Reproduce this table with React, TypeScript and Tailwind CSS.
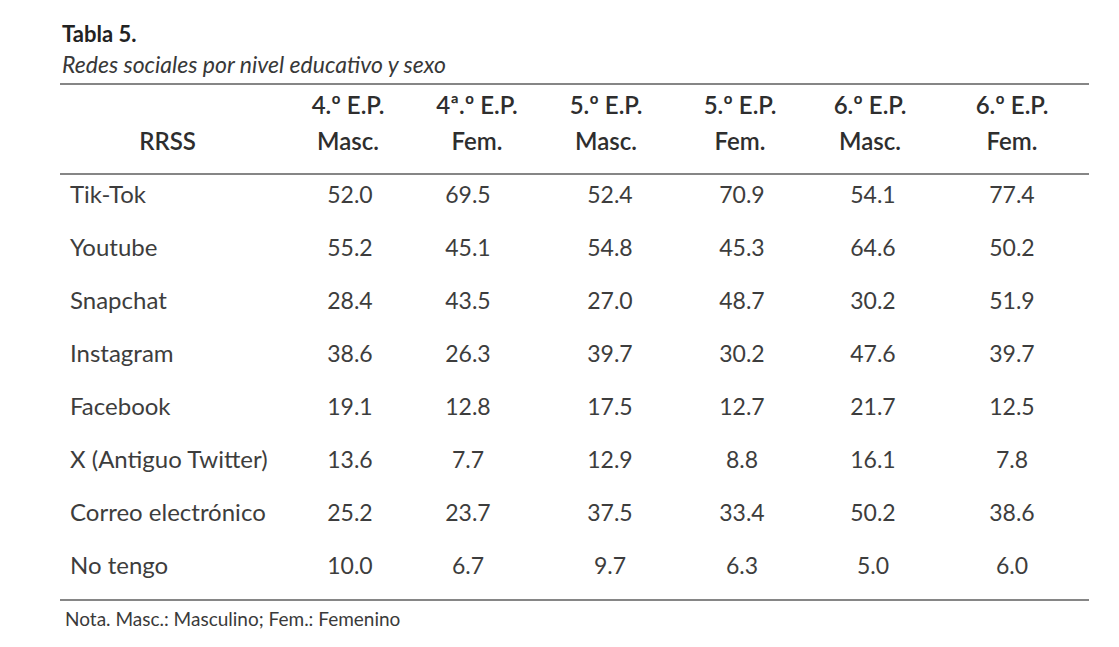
const headers = [
  { top: "4.º E.P.", bottom: "Masc." },
  { top: "4ª.º E.P.", bottom: "Fem." },
  { top: "5.º E.P.", bottom: "Masc." },
  { top: "5.º E.P.", bottom: "Fem." },
  { top: "6.º E.P.", bottom: "Masc." },
  { top: "6.º E.P.", bottom: "Fem." },
];

const rows: { name: string; values: string[] }[] = [
  { name: "Tik-Tok", values: ["52.0", "69.5", "52.4", "70.9", "54.1", "77.4"] },
  { name: "Youtube", values: ["55.2", "45.1", "54.8", "45.3", "64.6", "50.2"] },
  { name: "Snapchat", values: ["28.4", "43.5", "27.0", "48.7", "30.2", "51.9"] },
  { name: "Instagram", values: ["38.6", "26.3", "39.7", "30.2", "47.6", "39.7"] },
  { name: "Facebook", values: ["19.1", "12.8", "17.5", "12.7", "21.7", "12.5"] },
  { name: "X (Antiguo Twitter)", values: ["13.6", "7.7", "12.9", "8.8", "16.1", "7.8"] },
  { name: "Correo electrónico", values: ["25.2", "23.7", "37.5", "33.4", "50.2", "38.6"] },
  { name: "No tengo", values: ["10.0", "6.7", "9.7", "6.3", "5.0", "6.0"] },
];

// small per-column nudges so the numbers sit where the original put them
const cellPad = ["pl-0", "pr-[24px]", "pl-0", "pl-[4px]", "pl-[6px]", "pl-0"];
const headPad = ["pr-[4px]", "pr-[6px]", "pr-[8px]", "pl-0", "pl-0", "pl-0"];

export default function App() {
  return (
    <div className="w-[1119px] h-[647px] bg-white font-['Lato','Open_Sans',sans-serif] text-[#3d3d3d] overflow-hidden">
      <div className="pl-[60px] pr-[30px] pt-[18px]">
        <p className="pl-[2px] text-[22px] leading-[31px] font-bold text-[#222]">Tabla 5.</p>
        <p className="pl-[2px] text-[23px] leading-[30px] italic text-[#383838]">
          Redes sociales por nivel educativo y sexo
        </p>

        <div className="mt-[4px] border-t-2 border-b-2 border-[#868686]">
          {/* header */}
          <div className="grid grid-cols-[225px_130px_130px_130px_130px_130px_154px] pt-[2px] pb-[14px] border-b-2 border-[#868686] text-[24px] leading-[36px] font-semibold text-[#2e2e2e]">
            <div className="flex items-end justify-center pr-[10px]">RRSS</div>
            {headers.map((h, i) => (
              <div key={`Header-${i}`} className={`flex flex-col items-center ${headPad[i]}`}>
                <span>{h.top}</span>
                <span>{h.bottom}</span>
              </div>
            ))}
          </div>

          {/* body */}
          {rows.map((row) => (
            <div
              key={`Row-${row.name}`}
              className="grid grid-cols-[225px_130px_130px_130px_130px_130px_154px] h-[53px] pt-[4px] text-[23px] leading-[30px]"
            >
              <div className="pl-[10px] text-[24px]">{row.name}</div>
              {row.values.map((value, i) => (
                <div key={`Cell-${row.name}-${i}`} className={`text-center ${cellPad[i]}`}>
                  {value}
                </div>
              ))}
            </div>
          ))}
        </div>

        <p className="pl-[5px] pt-[3px] text-[19px] leading-[30px] text-[#3a3a3a]">
          Nota. Masc.: Masculino; Fem.: Femenino
        </p>
      </div>
    </div>
  );
}
